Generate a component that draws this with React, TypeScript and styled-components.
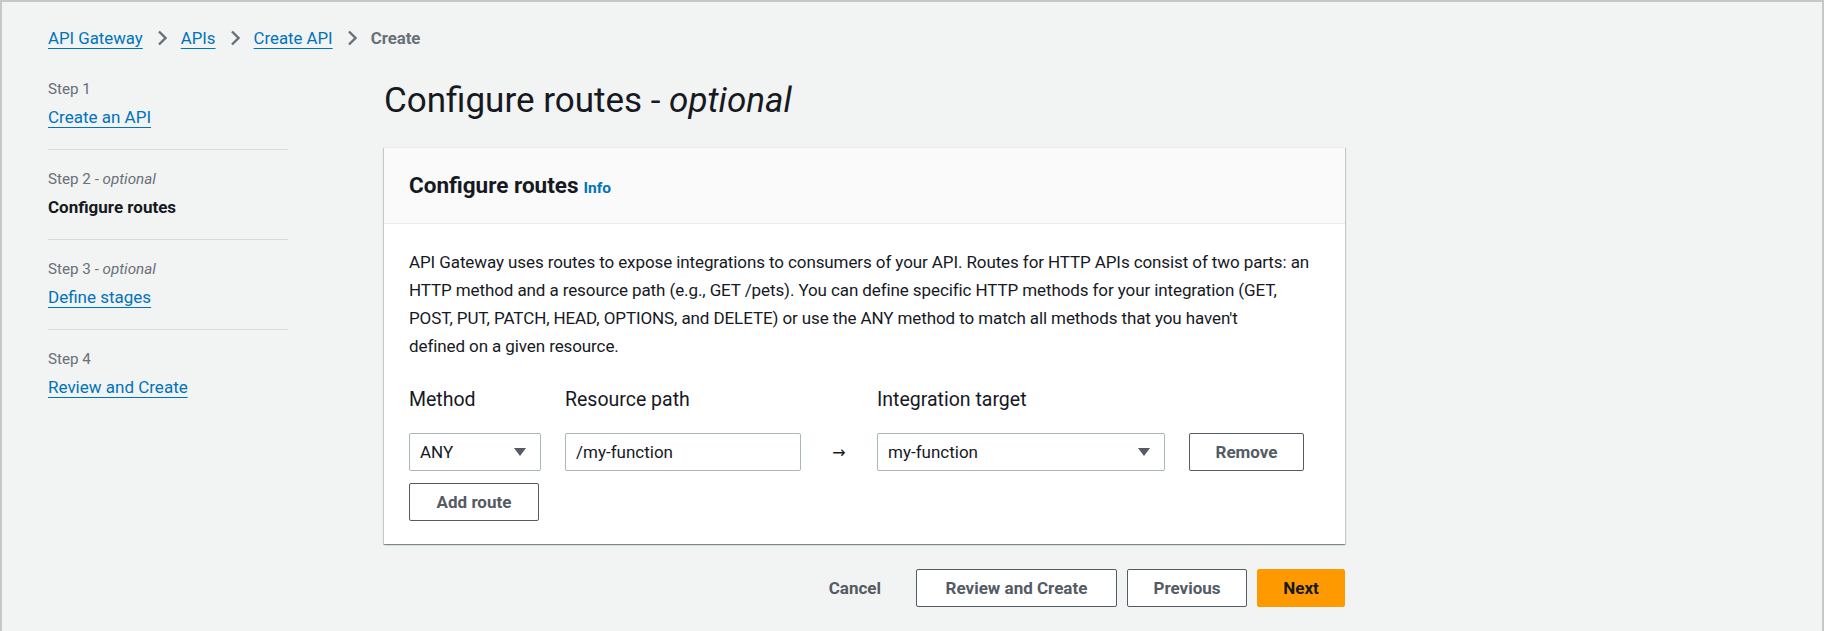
import React from "react";
import styled, { createGlobalStyle } from "styled-components";

const GlobalStyle = createGlobalStyle`
  html, body { margin: 0; padding: 0; }
  body {
    background: #f2f3f3;
    font-family: Roboto, "Liberation Sans", Arial, sans-serif;
    color: #16191f;
    -webkit-font-smoothing: antialiased;
  }
  * { box-sizing: border-box; }
`;

const Frame = styled.div`
  min-height: 100vh;
  border: 2px solid #c4c8ca;
  border-bottom: none;
  padding: 22px 0 0 46px;
`;

const Breadcrumbs = styled.nav`
  display: flex;
  align-items: center;
  gap: 14px;
  height: 28px;
  font-size: 16.8px;
  line-height: 28px;
`;

const Crumb = styled.a`
  color: #0073bb;
  text-decoration: underline;
  text-underline-offset: 4px;
  text-decoration-thickness: 1px;
`;

const CurrentCrumb = styled.span`
  color: #687078;
  font-weight: 700;
`;

const Layout = styled.div`
  display: grid;
  grid-template-columns: 240px 961px;
  column-gap: 96px;
  margin-top: 8px;
`;

const StepList = styled.ol`
  list-style: none;
  margin: 0;
  padding: 0;
`;

const Step = styled.li<{ $first?: boolean }>`
  padding: 17px 0 16px;
  border-top: ${(p) => (p.$first ? "none" : "1px solid #d5dbdb")};
`;

const StepLabel = styled.div`
  font-size: 15.2px;
  line-height: 24px;
  color: #687078;
  em { font-style: italic; }
`;

const StepLink = styled.a<{ $active?: boolean }>`
  display: inline-block;
  font-size: 17px;
  line-height: 32px;
  color: ${(p) => (p.$active ? "#16191f" : "#0073bb")};
  font-weight: ${(p) => (p.$active ? 700 : 400)};
  text-decoration: ${(p) => (p.$active ? "none" : "underline")};
  text-underline-offset: 4px;
  text-decoration-thickness: 1px;
`;

const Main = styled.main`
  display: flex;
  flex-direction: column;
`;

const Title = styled.h1`
  margin: 19px 0 24px;
  font-size: 35px;
  line-height: 44px;
  font-weight: 400;
  color: #16191f;
  em { font-style: italic; }
`;

const Card = styled.section`
  background: #ffffff;
  border-top: 1px solid #eaeded;
  box-shadow: 0 1px 1px 0 rgba(0, 28, 36, 0.3), 1px 1px 1px 0 rgba(0, 28, 36, 0.15),
    -1px 1px 1px 0 rgba(0, 28, 36, 0.15);
`;

const CardHeader = styled.header`
  display: flex;
  align-items: baseline;
  gap: 5px;
  padding: 23px 25px 24px 25px;
  background: #fafafa;
  border-bottom: 1px solid #eaeded;
`;

const CardTitle = styled.h2`
  margin: 0;
  font-size: 22.5px;
  line-height: 28px;
  font-weight: 700;
  color: #16191f;
`;

const InfoLink = styled.a`
  font-size: 15.5px;
  font-weight: 700;
  color: #0073bb;
  text-decoration: none;
`;

const CardBody = styled.div`
  padding: 24px 12px 23px 25px;
`;

const Description = styled.p`
  margin: 0;
  font-size: 17px;
  letter-spacing: -0.1px;
  line-height: 28px;
  white-space: nowrap;
  color: #16191f;
`;

const RouteGrid = styled.div`
  display: grid;
  grid-template-columns: 132px 236px 28px 288px 115px;
  column-gap: 24px;
  align-items: center;
  margin-top: 26px;
`;

const FieldLabel = styled.label`
  font-size: 19.5px;
  line-height: 28px;
  color: #16191f;
  margin-bottom: 19px;
`;

const Spacer = styled.span`
  margin-bottom: 19px;
`;

const SelectBox = styled.div`
  display: flex;
  align-items: center;
  justify-content: space-between;
  height: 38px;
  padding: 0 14px 0 10px;
  border: 1px solid #aab7b8;
  border-radius: 2px;
  background: #ffffff;
  font-size: 17px;
  color: #16191f;
`;

const TextInput = styled.div`
  display: flex;
  align-items: center;
  height: 38px;
  padding: 0 10px;
  border: 1px solid #aab7b8;
  border-radius: 2px;
  background: #ffffff;
  font-size: 17px;
  color: #16191f;
`;

const Arrow = styled.span`
  text-align: center;
  font-size: 16px;
  color: #16191f;
  font-family: "DejaVu Sans", sans-serif;
`;

const Button = styled.button<{ $variant?: "normal" | "primary" | "link"; $width?: number }>`
  height: 38px;
  padding: 0 24px;
  width: ${(p) => (p.$width ? `${p.$width}px` : "auto")};
  border-radius: 2px;
  font-family: inherit;
  font-size: 17px;
  font-weight: 700;
  cursor: pointer;
  border: 1px solid
    ${(p) => (p.$variant === "primary" ? "#ff9900" : p.$variant === "link" ? "transparent" : "#545b64")};
  background: ${(p) => (p.$variant === "primary" ? "#ff9900" : p.$variant === "link" ? "transparent" : "#ffffff")};
  color: ${(p) => (p.$variant === "primary" ? "#16191f" : "#545b64")};
`;

const AddRouteRow = styled.div`
  margin-top: 12px;
`;

const Footer = styled.div`
  display: flex;
  justify-content: flex-end;
  align-items: center;
  gap: 10px;
  margin-top: 25px;
`;

const Chevron = () => (
  <svg width="10" height="16" viewBox="0 0 10 16" aria-hidden="true">
    <polyline points="2,1.5 8.5,8 2,14.5" fill="none" stroke="#687078" strokeWidth="2.4" />
  </svg>
);

const Caret = () => (
  <svg width="12" height="8" viewBox="0 0 12 8" aria-hidden="true">
    <polygon points="0,0 12,0 6,8" fill="#545b64" />
  </svg>
);

export default function App() {
  return (
    <>
      <GlobalStyle />
      <Frame>
        <Breadcrumbs>
          <Crumb>API Gateway</Crumb>
          <Chevron />
          <Crumb>APIs</Crumb>
          <Chevron />
          <Crumb>Create API</Crumb>
          <Chevron />
          <CurrentCrumb>Create</CurrentCrumb>
        </Breadcrumbs>
        <Layout>
          <StepList>
            <Step $first>
              <StepLabel>Step 1</StepLabel>
              <StepLink>Create an API</StepLink>
            </Step>
            <Step>
              <StepLabel>
                Step 2 - <em>optional</em>
              </StepLabel>
              <StepLink $active>Configure routes</StepLink>
            </Step>
            <Step>
              <StepLabel>
                Step 3 - <em>optional</em>
              </StepLabel>
              <StepLink>Define stages</StepLink>
            </Step>
            <Step>
              <StepLabel>Step 4</StepLabel>
              <StepLink>Review and Create</StepLink>
            </Step>
          </StepList>
          <Main>
            <Title>
              Configure routes - <em>optional</em>
            </Title>
            <Card>
              <CardHeader>
                <CardTitle>Configure routes</CardTitle>
                <InfoLink>Info</InfoLink>
              </CardHeader>
              <CardBody>
                <Description>
                  API Gateway uses routes to expose integrations to consumers of your API. Routes for HTTP APIs
                  consist of two parts: an
                  <br />
                  HTTP method and a resource path (e.g., GET /pets). You can define specific HTTP methods for your
                  integration (GET,
                  <br />
                  POST, PUT, PATCH, HEAD, OPTIONS, and DELETE) or use the ANY method to match all methods that you
                  haven't
                  <br />
                  defined on a given resource.
                </Description>
                <RouteGrid>
                  <FieldLabel>Method</FieldLabel>
                  <FieldLabel>Resource path</FieldLabel>
                  <Spacer />
                  <FieldLabel>Integration target</FieldLabel>
                  <Spacer />
                  <SelectBox>
                    <span>ANY</span>
                    <Caret />
                  </SelectBox>
                  <TextInput>/my-function</TextInput>
                  <Arrow>→</Arrow>
                  <SelectBox>
                    <span>my-function</span>
                    <Caret />
                  </SelectBox>
                  <Button>Remove</Button>
                </RouteGrid>
                <AddRouteRow>
                  <Button $width={130}>Add route</Button>
                </AddRouteRow>
              </CardBody>
            </Card>
            <Footer>
              <Button $variant="link">Cancel</Button>
              <Button $width={201}>Review and Create</Button>
              <Button $width={120}>Previous</Button>
              <Button $variant="primary" $width={88}>
                Next
              </Button>
            </Footer>
          </Main>
        </Layout>
      </Frame>
    </>
  );
}
